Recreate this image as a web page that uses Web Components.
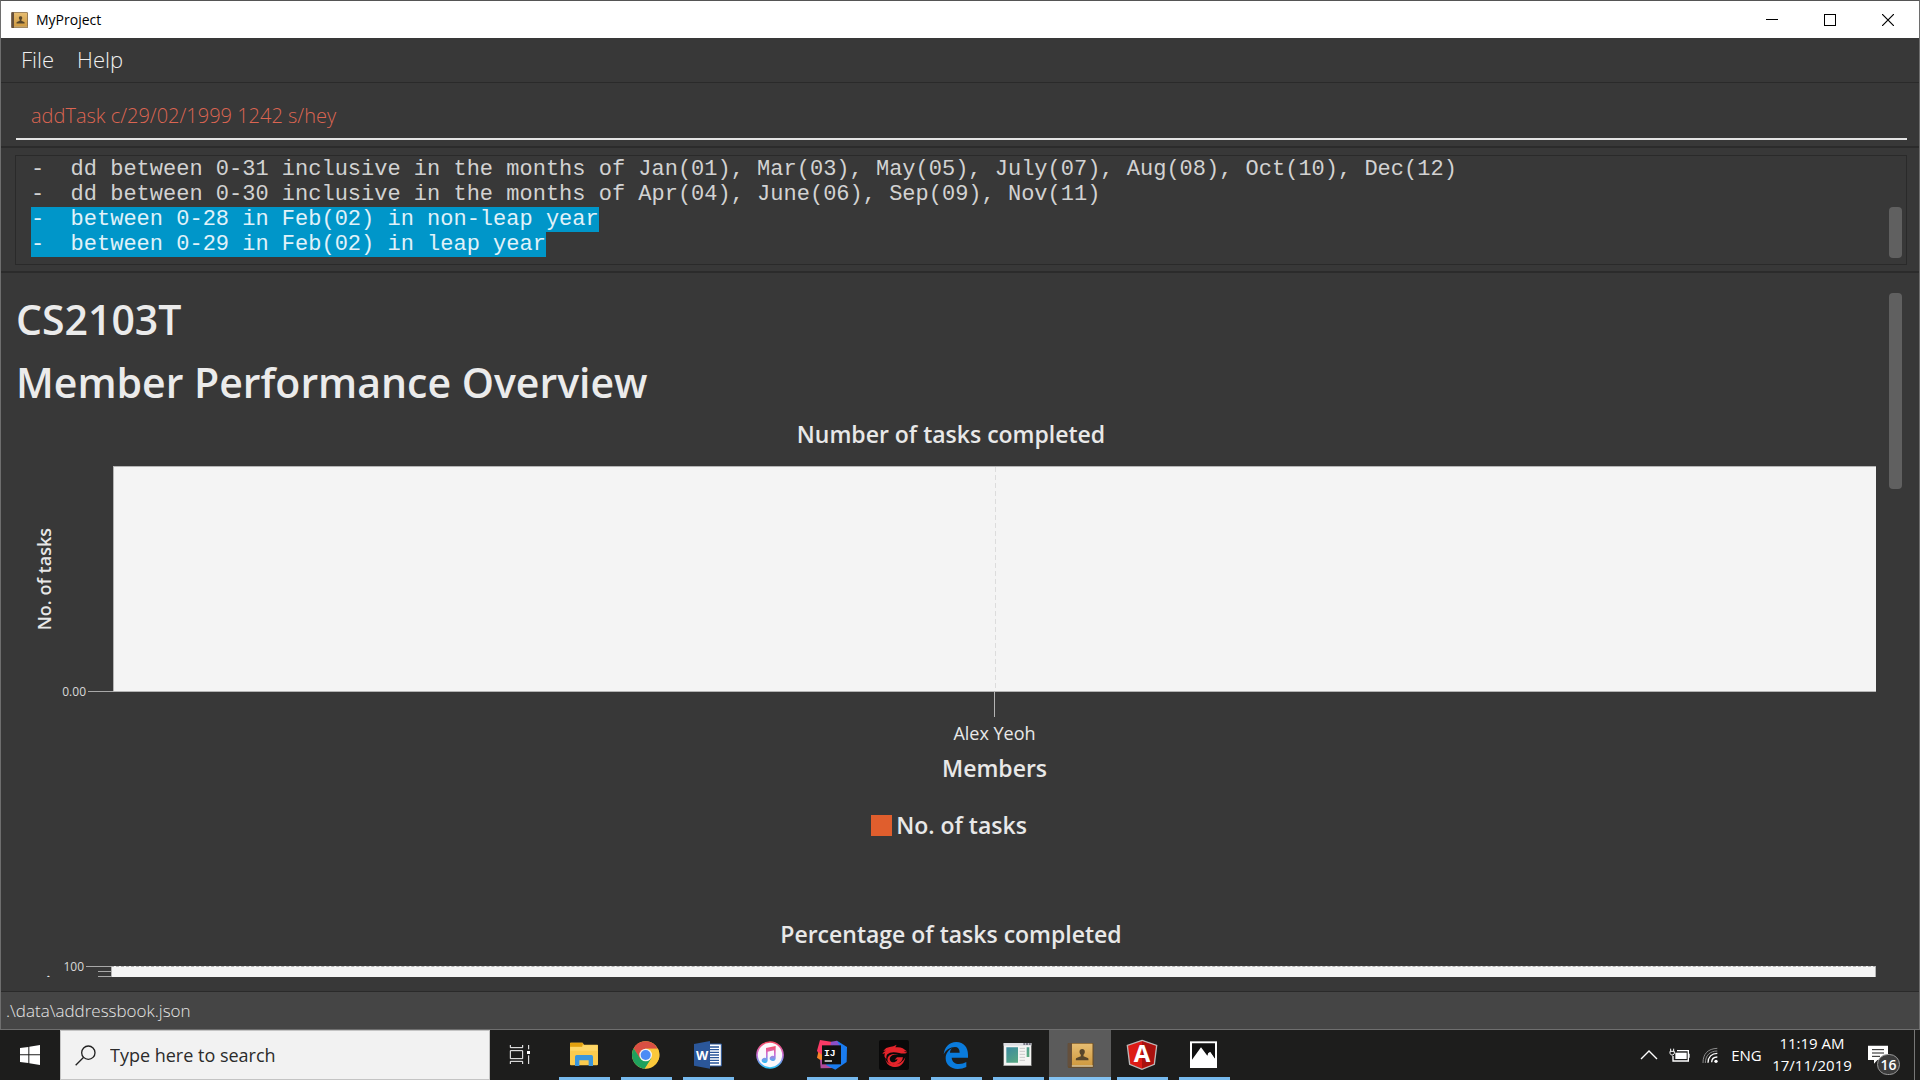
<!DOCTYPE html>
<html lang="en">
<head>
<meta charset="utf-8">
<title>MyProject</title>
<style>
  html, body { margin: 0; height: 100%; background: #1d1d1c; }
  body { font-family: "Open Sans", "Noto Sans", sans-serif; color: #e8e8e8; overflow: hidden; }
</style>
</head>
<body>
<desktop-screen>
  <app-window>
    <title-bar slot="title">MyProject</title-bar>
    <menu-bar>
      <menu-item>File</menu-item>
      <menu-item>Help</menu-item>
    </menu-bar>
    <command-box value="addTask c/29/02/1999 1242 s/hey"></command-box>
    <result-display>
      <result-line>-  dd between 0-31 inclusive in the months of Jan(01), Mar(03), May(05), July(07), Aug(08), Oct(10), Dec(12)</result-line>
      <result-line>-  dd between 0-30 inclusive in the months of Apr(04), June(06), Sep(09), Nov(11)</result-line>
      <result-line selected>-  between 0-28 in Feb(02) in non-leap year</result-line>
      <result-line selected>-  between 0-29 in Feb(02) in leap year</result-line>
    </result-display>
    <stats-panel>
      <span slot="project">CS2103T</span>
      <span slot="heading">Member Performance Overview</span>
      <member-chart>
        <span slot="title">Number of tasks completed</span>
        <span slot="ylabel">No. of tasks</span>
        <span slot="tick">0.00</span>
        <span slot="category">Alex Yeoh</span>
        <span slot="xlabel">Members</span>
        <span slot="legend">No. of tasks</span>
      </member-chart>
      <percent-chart>
        <span slot="title">Percentage of tasks completed</span>
        <span slot="ylabel">.</span>
        <span slot="tick">100</span>
      </percent-chart>
    </stats-panel>
    <status-footer slot="status">.\data\addressbook.json</status-footer>
  </app-window>
  <task-bar></task-bar>
</desktop-screen>

<script>
const define = (name, markup, setup) => customElements.define(name, class extends HTMLElement {
  constructor() {
    super();
    this.attachShadow({ mode: "open" }).innerHTML = markup;
  }
  connectedCallback() { if (setup) setup(this, this.shadowRoot); }
});

define("desktop-screen", `
<style>
  :host { display: flex; flex-direction: column; height: 100vh; }
</style>
<slot></slot>`);

define("app-window", `
<style>
  :host { display: flex; flex-direction: column; flex: 1; min-height: 0; box-sizing: border-box;
    border: 1px solid #6e6e6e; border-top-color: #555; background: #383838; }
</style>
<slot name="title"></slot><slot></slot><slot name="status"></slot>`);

define("book-icon", `
<style>
  :host { display: block; }
  svg { display: block; width: 100%; height: 100%; }
</style>
<svg viewBox="0 0 80 78">
  <defs><linearGradient id="g" x1="0" y1="0" x2="0" y2="1"><stop offset="0" stop-color="#e6bd72"/><stop offset="1" stop-color="#d09a40"/></linearGradient></defs>
  <rect x="2" y="3" width="77" height="74" rx="3" fill="#6a4a20"/>
  <rect x="14" y="5" width="62" height="65" fill="url(#g)"/>
  <rect x="2" y="3" width="12" height="71" rx="2" fill="#65503c"/>
  <path d="M14 70h63v4H14z" fill="#f1dcae"/>
  <path d="M45 21c5 0 8 3 8 8 0 4-2 7-4 9v5l13 5c2 1 2 3 2 7H26c0-4 0-6 2-7l13-5v-5c-2-2-4-5-4-9 0-5 3-8 8-8z" fill="#57462b"/>
</svg>`);

define("title-bar", `
<style>
  :host { display: flex; align-items: center; height: 37px; padding: 0 2px 0 10px; background: #fff; color: #000; font-size: 14px; }
  book-icon { width: 17px; height: 18px; margin-right: 8px; flex: none; }
  .name { flex: 1; line-height: 20px; }
  button { width: 58px; height: 36px; border: 0; padding: 0; background: none; display: grid; place-items: center; }
  svg { width: 12px; height: 12px; fill: none; stroke: #000; shape-rendering: crispEdges; }
  .x svg { shape-rendering: auto; stroke-width: 1.2; }
</style>
<book-icon></book-icon><span class="name"><slot></slot></span>
<button aria-label="Minimize"><svg viewBox="0 0 12 12"><path d="M0 5.5h12"/></svg></button>
<button aria-label="Maximize"><svg viewBox="0 0 12 12"><path d="M.5.5h11v11H.5z"/></svg></button>
<button class="x" aria-label="Close"><svg viewBox="0 0 12 12"><path d="M0 0l12 12M12 0L0 12"/></svg></button>`);

define("menu-bar", `
<style>
  :host { display: flex; gap: 23px; padding: 0 20px 2px; height: 42px; align-items: center; border-bottom: 1px solid #2a2a2a; }
</style>
<slot></slot>`);

define("menu-item", `
<style>
  :host { display: block; }
  button { font: 300 22px/30px "Open Sans", sans-serif; color: #f0f0f0; background: none; border: 0; padding: 0; }
</style>
<button><slot></slot></button>`);

define("command-box", `
<style>
  :host { display: block; padding: 10px 12px 6px 15px; border-bottom: 2px solid #2b2b2b; }
  input { display: block; width: 100%; box-sizing: border-box; height: 47px; padding: 0 15px; border: 0;
    border-bottom: 2px solid #e4e4e4; background: none; outline: 0; border-radius: 0;
    font: 300 20px/28px "Open Sans", sans-serif; color: #dc6552; }
</style>
<input type="text" aria-label="Command">`,
(host, root) => { root.querySelector("input").value = host.getAttribute("value"); });

define("scroll-thumb", `
<style>
  :host { display: block; width: 13px; border-radius: 4px; background: #606060; flex: none; }
</style>`);

define("result-display", `
<style>
  :host { display: block; padding: 7px 12px 6px 14px; border-bottom: 2px solid #2b2b2b; }
  .box { display: flex; justify-content: space-between; border: 1px solid #2a2a2a; height: 107px; padding: 1px 4px 0 15px; }
  scroll-thumb { height: 51px; align-self: flex-end; margin-bottom: 6px; }
</style>
<div class="box"><div class="text"><slot></slot></div><scroll-thumb></scroll-thumb></div>`);

define("result-line", `
<style>
  :host { display: block; font: 22px/25px "Liberation Mono", monospace; color: #d2d2d2; }
  span { display: block; width: max-content; white-space: pre; }
  :host([selected]) span { background: #0096c9; color: #e0f2f9; }
</style>
<span><slot></slot></span>`);

define("stats-panel", `
<style>
  :host { display: flex; flex: 1; min-height: 0; padding: 15px 17px 14px 15px; box-sizing: border-box; }
  .view { flex: 1; min-width: 0; overflow: hidden; padding-right: 13px; }
  h1 { margin: 0; font-size: 41px; line-height: 63px; font-weight: 600; color: #ebebeb; }
  scroll-thumb { height: 196px; margin-top: 5px; }
</style>
<div class="view">
  <h1><slot name="project"></slot></h1>
  <h1><slot name="heading"></slot></h1>
  <slot></slot>
</div>
<scroll-thumb></scroll-thumb>`);

const chartStyle = `
  :host { display: block; }
  .title { text-align: center; font-size: 23px; line-height: 36px; font-weight: 600; padding: 2px 0 14px 10px; }
  .body { display: grid; grid-template-columns: 97px 1fr; }
  .axis { display: flex; justify-content: flex-end; }
  .tick { font-size: 12px; line-height: 14px; color: #d8d8d8; }
`;

define("member-chart", `
<style>${chartStyle}
  .axis { align-items: flex-end; gap: 2px; }
  .ylabel { writing-mode: vertical-rl; transform: rotate(180deg); align-self: center; margin-right: auto; margin-left: 14px;
    font-size: 18px; line-height: 28px; font-weight: 600; }
  .tick { margin-bottom: -7px; }
  .mark { width: 25px; height: 1px; background: #a8a8a8; }
  .plot { height: 226px; box-sizing: border-box; background: #f4f4f4; border: 1px solid #b4b4b4; border-width: 1px 0 1px 1px; display: flex; justify-content: center; }
  .grid { width: 1px; background: repeating-linear-gradient(#dcdcdc 0 5px, #f4f4f4 5px 8px); }
  .below { grid-column: 2; display: flex; flex-direction: column; align-items: center; }
  .stem { width: 1px; height: 25px; background: #b4b4b4; }
  .cat { font-size: 18px; line-height: 24px; padding-top: 4px; }
  .xl { font-size: 23px; line-height: 36px; font-weight: 600; padding-top: 5px; }
  .legend { display: flex; justify-content: center; align-items: center; gap: 4px; font-size: 23px; line-height: 36px; font-weight: 600; padding: 21px 0 71px 6px; }
  .swatch { width: 21px; height: 21px; background: #e05e2d; }
</style>
<div class="title"><slot name="title"></slot></div>
<div class="body">
  <div class="axis"><span class="ylabel"><slot name="ylabel"></slot></span><span class="tick"><slot name="tick"></slot></span><i class="mark"></i></div>
  <div class="plot"><i class="grid"></i></div>
  <div class="below"><i class="stem"></i><span class="cat"><slot name="category"></slot></span><span class="xl"><slot name="xlabel"></slot></span></div>
</div>
<div class="legend"><i class="swatch"></i><slot name="legend"></slot></div>`);

define("percent-chart", `
<style>${chartStyle}
  .body { grid-template-columns: 95px 1fr; height: 225px; }
  .axis { gap: 2px; }
  .ylabel { margin-right: auto; margin-left: 30px; font-size: 18px; line-height: 10px; }
  .tick { margin-top: -6px; }
  .marks { display: flex; flex-direction: column; align-items: flex-end; gap: 4px; width: 25px; }
  .marks i { width: 13px; height: 1px; background: #a8a8a8; }
  .marks .major { width: 25px; }
  .plot { background: #f4f4f4; border: 1px solid #b4b4b4; border-top-style: dashed; }
</style>
<div class="title"><slot name="title"></slot></div>
<div class="body">
  <div class="axis"><span class="ylabel"><slot name="ylabel"></slot></span><span class="tick"><slot name="tick"></slot></span><div class="marks"><i class="major"></i><i></i><i></i></div></div>
  <div class="plot"></div>
</div>`);

define("status-footer", `
<style>
  :host { display: flex; align-items: center; height: 37px; padding: 0 5px; background: #454545; border-top: 1px solid #2a2a2a;
    font-size: 17px; font-weight: 300; line-height: 24px; color: #e6e6e6; }
</style>
<slot></slot>`);

define("task-button", `
<style>
  :host { display: block; flex: none; }
  button { display: flex; flex-direction: column; align-items: center; width: 62px; height: 50px; padding: 0; border: 0; background: none; }
  .art { height: 47px; display: block; overflow: hidden; }
  .run { width: 51px; height: 3px; }
  :host([running]) .run { background: #76b9ed; }
  :host([active]) button { background: #5b5b5b; }
  :host([active]) .run { width: 62px; background: #83c2f2; }
</style>
<button><span class="art"><slot></slot></span><i class="run"></i></button>`,
(host, root) => root.querySelector("button").setAttribute("aria-label", host.getAttribute("label")));

define("system-tray", `
<style>
  :host { display: flex; align-items: center; height: 50px; color: #fff; font-size: 15px; line-height: 22px; flex: none; }
  button { font: inherit; color: inherit; background: none; border: 0; padding: 0; display: grid; place-items: center; height: 50px; }
  svg { display: block; fill: none; stroke: #fff; }
  .icon { width: 31px; }
  .lang { width: 41px; }
  .clock { width: 90px; padding-bottom: 2px; }
  .note { width: 57px; position: relative; place-items: center start; padding-left: 11px; }
  .badge { position: absolute; left: 20px; top: 24px; width: 21px; height: 19px; border: 1px solid #9a9a9a; border-radius: 11px;
    background: #3c3c3c; font-size: 14px; line-height: 19px; font-weight: 600; }
  .peek { width: 6px; border-left: 1px solid #777; }
</style>
<button class="icon" aria-label="Show hidden icons"><svg width="18" height="10" viewBox="0 0 18 10" stroke-width="1.4"><path d="M1 9l8-8 8 8"/></svg></button>
<button class="icon" aria-label="Battery"><svg width="21" height="14" viewBox="0 0 63 42" stroke-width="4"><path d="M24 8h34v31H12V24"/><path d="M19 14h34v19H19z" fill="#fff" stroke="none"/><path d="M60 17v12" /><path d="M5 2v7M14 2v7M3 10h13v6l-4 5H7l-4-5z" stroke-width="3"/></svg></button>
<button class="icon" aria-label="Wi-Fi"><svg width="17" height="17" viewBox="0 0 51 51" stroke-width="4"><circle cx="42" cy="43" r="5" fill="#fff" stroke="none"/><path d="M29 46c0-10 7-16 17-16M18 47c0-17 11-28 28-28"/><path d="M3 48C3 20 18 5 46 4M10 48c0-23 14-36 36-36" stroke="#8a8a8a" stroke-width="3"/></svg></button>
<button class="lang">ENG</button>
<button class="clock"><span>11:19 AM<br>17/11/2019</span></button>
<button class="note" aria-label="Notifications"><svg width="20" height="20" viewBox="0 0 60 60"><path d="M0 2h60v43H28L18 56V45H0z" fill="#fff" stroke="none"/><path d="M12 14h36M12 24h36M12 34h24" stroke="#1d1d1c" stroke-width="3"/></svg><span class="badge">16</span></button>
<button class="peek" aria-label="Show desktop"></button>`);

define("task-bar", `
<style>
  :host { display: flex; height: 50px; background: #1d1d1c; align-items: stretch; flex: none; }
  svg { display: block; width: 62px; height: 47px; }
  .start { width: 60px; border: 0; padding: 0; background: none; display: grid; place-items: center; }
  .start svg { width: 20px; height: 20px; }
  .search { display: flex; align-items: center; gap: 14px; width: 430px; box-sizing: border-box; padding-left: 14px; background: #f2f2f2; border: 1px solid #c4c4c4; color: #222; margin-right: 1px; }
  .search svg { width: 21px; height: 21px; flex: none; }
  .search input { flex: 1; min-width: 0; border: 0; padding: 0; background: none; outline: 0; font: 18px/26px "Open Sans", sans-serif; color: #2b2b2b; }
  .search input::placeholder { color: #2b2b2b; opacity: 1; }
  book-icon { width: 27px; height: 26px; margin-top: 12px; }
  .space { flex: 1; }
  text { font-family: "Open Sans", sans-serif; font-weight: 700; fill: #fff; }
  .mono { font-family: "Liberation Mono", monospace; }
</style>
<button class="start" aria-label="Start"><svg viewBox="0 0 60 60"><path d="M0 9l25-3v22H0zM28 5l32-5v28H28zM0 31h25v23L0 51zM28 31h32v29l-32-5z" fill="#fff"/></svg></button>
<label class="search"><svg viewBox="0 0 63 63" fill="none" stroke="#222" stroke-width="4"><circle cx="40" cy="23" r="20"/><path d="M26 37L2 61"/></svg><input type="search" placeholder="Type here to search" aria-label="Type here to search"></label>
<task-button label="Task View"><svg viewBox="-27 15 186 141" fill="none" stroke="#fff" stroke-width="3"><path d="M31 60v8h37v-8M31 117v-8h37v8M31 77h37v24H31zM86 60v13M86 91v26"/><path d="M81 78h9v9h-9z" fill="#fff" stroke="none"/></svg></task-button>
<task-button label="File Explorer" running><svg viewBox="159 15 186 141"><path d="M210 55q0-2 2-2h36l4 6h40q2 0 2 2v57q0 3-3 3h-78q-3 0-3-3z" fill="#fbcb4e"/><path d="M210 55q0-2 2-2h34q3 0 3 3l-3 9h-36z" fill="#e3a10f"/><path d="M211 66h36l4-5h41v16h-81z" fill="#ffd768"/><path d="M225 123V95q0-5 5-5h44q5 0 5 5v28h-13v-17h-28v17z" fill="#3a96dd"/></svg></task-button>
<task-button label="Google Chrome" running><svg viewBox="345 15 186 141"><circle cx="437" cy="90" r="41" fill="#fbc83a"/><path d="M401 70a41 41 0 0 1 72 1h-36l-18 30z" fill="#d94f43"/><path d="M401 70a41 41 0 0 0 33 61l20-31h-34z" fill="#1fa15d"/><path d="M437 71h37q14 34-18 53l-21 7 21-31z" fill="#fbc83a"/><circle cx="437" cy="90" r="19" fill="#f3f3f3"/><circle cx="437" cy="90" r="15" fill="#4a8bf5"/></svg></task-button>
<task-button label="Word" running><svg viewBox="531 15 186 141"><path d="M628 57h36v66h-36z" fill="#fff" stroke="#2b579a" stroke-width="3"/><path d="M630 66h27M630 74h27M630 82h27M630 90h27M630 98h27M630 106h27M630 114h27" stroke="#2b579a" stroke-width="4"/><path d="M582 57l48-9v83l-48-9z" fill="#2b579a"/><text x="588" y="105" font-size="38">W</text></svg></task-button>
<task-button label="iTunes"><svg viewBox="717 15 186 141"><defs><linearGradient id="r" x1="0" y1="0" x2="0" y2="1"><stop offset="0" stop-color="#f84d62"/><stop offset=".5" stop-color="#c96fdc"/><stop offset="1" stop-color="#28c3f5"/></linearGradient></defs><circle cx="810" cy="90" r="39" fill="#fbf8fc" stroke="url(#r)" stroke-width="5"/><path d="M798 69l29-6v37a9 8 0 1 1-5-7V76l-19 4v26a9 8 0 1 1-5-7z" fill="url(#r)"/></svg></task-button>
<task-button label="IntelliJ IDEA" running><svg viewBox="903 15 186 141"><path d="M960 45l33 5 12 20-40 30-14-23z" fill="#fc3a66"/><path d="M951 98l4-17 20 15-10 12z" fill="#f58529"/><path d="M960 104h20l25 25-43 1z" fill="#b24a9c"/><path d="M1011 47l30 19-1 45-34 23-28-14 25-66z" fill="#1a7cf0"/><path d="M993 50l18-3 8 15h-28z" fill="#8b50c8"/><path d="M966 61h57v57h-57z" fill="#111"/><text class="mono" x="972" y="93" font-size="29">IJ</text><path d="M974 106h22v4h-22z" fill="#fff"/></svg></task-button>
<task-button label="Garena" running><svg viewBox="39 15 186 141"><rect x="87" y="45" width="90" height="90" rx="6" fill="#090909"/><path d="M100 77q8-10 19-11 12-1 21-7l-4 8q14-2 22 3l13 9q-4 1-10-1 4 4 11 5-12 5-24 1-25-6-36 4-5 6-3 14-9-6-4-17l-8 2q3-7 11-10z" fill="#e3242b"/><path d="M146 88q-25 0-27 13 1 12 14 11 8-1 10-9l-9 1 7-7h18q-3 20-25 22-22 0-22-16 2-19 34-15zM106 99q3 19 26 20 24-1 34-22-4 20-18 27-9 4-21 1-20-5-21-26z" fill="#e3242b"/></svg></task-button>
<task-button label="Edge" running><svg viewBox="225 15 186 141"><path d="M281 88c3-22 16-37 38-37 23 0 35 17 35 38v9h-49c1 13 11 19 22 19 9 0 15-2 22-6v15c-8 4-16 6-26 6-22 0-36-14-36-32 0-14 8-25 19-30-4 4-6 8-6 13h29c0-11-5-17-14-17-15 0-27 9-34 22z" fill="#0a7bdc"/></svg></task-button>
<task-button label="Desktop App" running><svg viewBox="411 15 186 141"><defs><linearGradient id="w" x1="0" y1="0" x2="1" y2="1"><stop offset="0" stop-color="#3b8aa0"/><stop offset="1" stop-color="#62b276"/></linearGradient></defs><rect x="461" y="54" width="83" height="68" fill="#f4f4f2"/><path d="M461 54h83v8h-83z" fill="#dcdde2"/><path d="M520 57h22" stroke="#556" stroke-width="4" stroke-dasharray="6 2"/><path d="M469 67h35v46h-35zM530 67h8v29h-8z" fill="url(#w)"/><path d="M509 70h16M509 79h16M509 88h16M509 97h16M509 106h16" stroke="#c9c9c9" stroke-width="3"/><path d="M461 120h83v3h-83z" fill="#aaa"/></svg></task-button>
<task-button label="MyProject" running active><book-icon></book-icon></task-button>
<task-button label="Angular" running><svg viewBox="783 15 186 141"><path d="M876 46l44 15-7 57-37 15-37-15-7-57z" fill="#dd1b16" stroke="#b8b8b8" stroke-width="4"/><path d="M876 49l41 14-7 53-34 14z" fill="#a8120f"/><text x="876" y="110" font-size="72" text-anchor="middle">A</text></svg></task-button>
<task-button label="Photos" running><svg viewBox="969 15 186 141"><path d="M1020 49h81v80h-81z" fill="#fff"/><path d="M1026 55h69v47l-14-21-6 3-3 8-19-25-27 37z" fill="#111"/><path d="M1074 86l8 4 13 20v-8l-15-20z" fill="#fff"/></svg></task-button>
<span class="space"></span>
<system-tray></system-tray>`);
</script>
</body>
</html>
